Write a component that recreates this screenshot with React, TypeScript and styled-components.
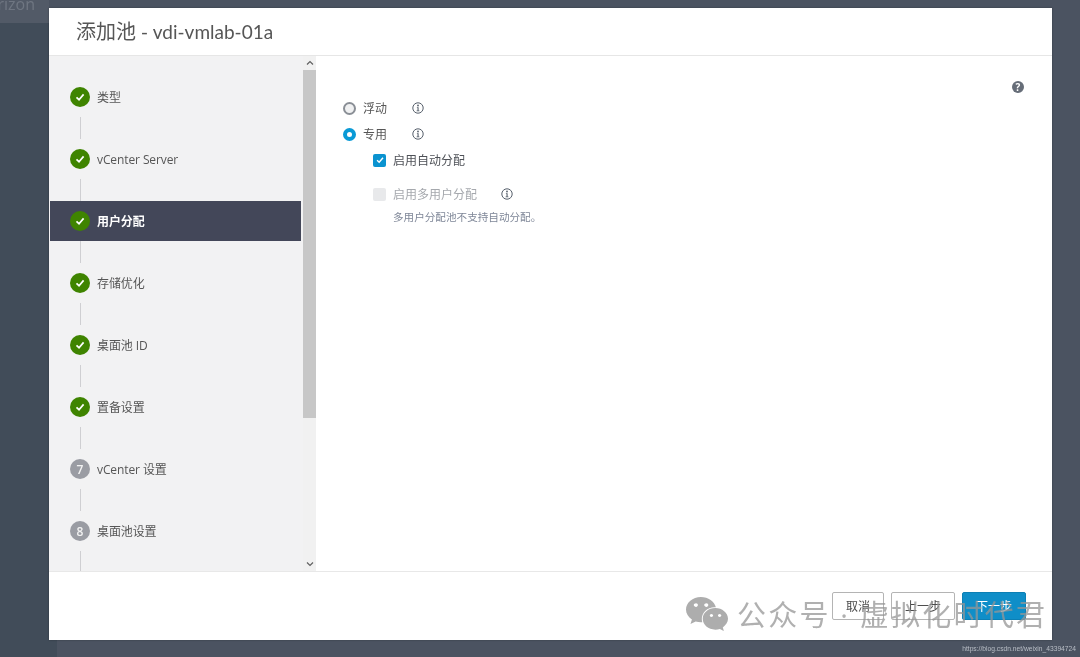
import React from "react";
import styled, { createGlobalStyle } from "styled-components";
import { FaWeixin } from "react-icons/fa";

const GlobalStyle = createGlobalStyle`
  html, body {
    margin: 0;
    padding: 0;
    height: 100%;
    overflow: hidden;
    background: #4b5361;
    font-family: "Open Sans", "Noto Sans CJK SC", sans-serif;
  }
  * { box-sizing: border-box; }
`;

const steps = [
  { label: "类型", done: true },
  { label: "vCenter Server", done: true },
  { label: "用户分配", done: true, active: true },
  { label: "存储优化", done: true },
  { label: "桌面池 ID", done: true },
  { label: "置备设置", done: true },
  { label: "vCenter 设置", num: 7 },
  { label: "桌面池设置", num: 8 },
];

const InfoIcon = () => (
  <InfoSvg viewBox="0 0 12 12">
    <circle cx="6" cy="6" r="5.2" fill="none" stroke="#565f6b" strokeWidth="1" />
    <circle cx="6" cy="3.5" r="0.9" fill="#565f6b" />
    <path d="M4.9 5.2H6.6V8.6H7.4V9.3H4.6V8.6H5.5V5.9H4.9Z" fill="#565f6b" />
  </InfoSvg>
);

const CheckIcon = ({ size }: { size: number }) => (
  <svg width={size} height={size} viewBox="0 0 12 12">
    <path d="M2.5 6.4L5 8.7L9.6 3.4" fill="none" stroke="#fff" strokeWidth="1.7" />
  </svg>
);

export default function App() {
  return (
    <Page>
      <GlobalStyle />
      <TopBand>Horizon</TopBand>
      <LeftBand />
      <Modal>
        <Title>
          添加池 - <TitleName>vdi-vmlab-01a</TitleName>
        </Title>
        <Body>
          <Sidebar>
            <StepList>
              {steps.map((s) => (
                <React.Fragment key={s.label}>
                  <StepRow $active={s.active}>
                    <StepBadge $done={s.done}>
                      {s.done ? <CheckIcon size={12} /> : s.num}
                    </StepBadge>
                    <StepLabel $active={s.active}>{s.label}</StepLabel>
                  </StepRow>
                  <Connector />
                </React.Fragment>
              ))}
            </StepList>
          </Sidebar>
          <ScrollTrack>
            <ScrollArrow viewBox="0 0 8 6">
              <path d="M1 4.5L4 1.5L7 4.5" fill="none" stroke="#606060" strokeWidth="1.2" />
            </ScrollArrow>
            <ScrollThumb />
            <ScrollArrow viewBox="0 0 8 6">
              <path d="M1 1.5L4 4.5L7 1.5" fill="none" stroke="#606060" strokeWidth="1.2" />
            </ScrollArrow>
          </ScrollTrack>
          <Content>
            <HelpIcon>?</HelpIcon>
            <Option>
              <Radio />
              <OptionText>浮动</OptionText>
              <InfoIcon />
            </Option>
            <Option>
              <Radio $checked />
              <OptionText>专用</OptionText>
              <InfoIcon />
            </Option>
            <SubGroup>
              <CheckRow>
                <CheckBox $checked>
                  <CheckIcon size={10} />
                </CheckBox>
                <CheckText>启用自动分配</CheckText>
              </CheckRow>
              <DisabledRow>
                <CheckBox />
                <CheckText $disabled>启用多用户分配</CheckText>
                <InfoIcon />
              </DisabledRow>
              <Hint>多用户分配池不支持自动分配。</Hint>
            </SubGroup>
          </Content>
        </Body>
        <Footer>
          <OutlineButton $width={52}>取消</OutlineButton>
          <OutlineButton $width={64}>上一步</OutlineButton>
          <PrimaryButton>下一步</PrimaryButton>
        </Footer>
      </Modal>
      <Watermark>
        <FaWeixin size={44} color="#adadad" />
        <WatermarkText>公众号 · 虚拟化时代君</WatermarkText>
      </Watermark>
      <SourceUrl>https://blog.csdn.net/weixin_43394724</SourceUrl>
    </Page>
  );
}

const Page = styled.div`
  position: relative;
  width: 1080px;
  height: 657px;
  overflow: hidden;
  padding: 8px 28px 17px 49px;
  background: #4b5361;
  filter: blur(0.45px);
`;

const TopBand = styled.div`
  position: absolute;
  left: 0;
  top: 0;
  width: 49px;
  height: 23px;
  overflow: hidden;
  background: #525a67;
  color: #6f7682;
  font-size: 16px;
  line-height: 8px;
  text-indent: -24px;
  white-space: nowrap;
`;

const LeftBand = styled.div`
  position: absolute;
  left: 0;
  top: 23px;
  width: 57px;
  height: 634px;
  background: #414c59;
`;

const Modal = styled.div`
  position: relative;
  display: flex;
  flex-direction: column;
  width: 1003px;
  height: 632px;
  background: #fff;
  box-shadow: 0 0 2px rgba(0, 0, 0, 0.3);
`;

const Title = styled.div`
  height: 48px;
  padding: 9px 0 0 27px;
  font-size: 20px;
  line-height: 30px;
  color: #565656;
  border-bottom: 1px solid #e6e6e6;
  flex: none;
`;

const TitleName = styled.span`
  font-family: Lato, "Open Sans", sans-serif;
  font-size: 19px;
`;

const Body = styled.div`
  display: flex;
  flex: none;
  height: 515px;
`;

const Sidebar = styled.div`
  width: 254px;
  background: #f2f2f3;
  overflow: hidden;
  padding-top: 21px;
`;

const StepList = styled.div`
  display: flex;
  flex-direction: column;
`;

const StepRow = styled.div<{ $active?: boolean }>`
  display: flex;
  align-items: center;
  height: 40px;
  margin: 0 2px 0 1px;
  padding-left: 20px;
  gap: 7px;
  background: ${(p) => (p.$active ? "#434759" : "transparent")};
`;

const StepBadge = styled.div<{ $done?: boolean }>`
  display: flex;
  align-items: center;
  justify-content: center;
  width: 20px;
  height: 20px;
  border-radius: 50%;
  background: ${(p) => (p.$done ? "#3f8400" : "#9a9ca3")};
  color: #f2f2f2;
  font-size: 12px;
  font-weight: 600;
`;

const StepLabel = styled.span<{ $active?: boolean }>`
  font-size: 12px;
  letter-spacing: -0.1px;
  font-weight: ${(p) => (p.$active ? 700 : 400)};
  color: ${(p) => (p.$active ? "#fff" : "#565656")};
`;

const Connector = styled.div`
  width: 1px;
  height: 22px;
  margin-left: 31px;
  background: #cfcfd2;
`;

const ScrollTrack = styled.div`
  display: flex;
  flex-direction: column;
  align-items: center;
  width: 13px;
  background: #f1f1f1;
`;

const ScrollArrow = styled.svg`
  flex: none;
  width: 8px;
  height: 6px;
  margin: 4px 0;
`;

const ScrollThumb = styled.div`
  width: 13px;
  height: 348px;
  margin-bottom: auto;
  background: #c7c7c7;
`;

const Content = styled.div`
  position: relative;
  flex: 1;
  padding: 39px 0 0 27px;
`;

const HelpIcon = styled.div`
  position: absolute;
  right: 28px;
  top: 25px;
  width: 12px;
  height: 12px;
  border-radius: 50%;
  background: #666d78;
  color: #fff;
  font-size: 10px;
  font-weight: 700;
  line-height: 12px;
  text-align: center;
`;

const Option = styled.div`
  display: flex;
  align-items: center;
  height: 26px;
`;

const Radio = styled.div<{ $checked?: boolean }>`
  width: 13px;
  height: 13px;
  margin-right: 7px;
  border-radius: 50%;
  background: ${(p) => (p.$checked ? "#fff" : "#f0f1f2")};
  border: ${(p) => (p.$checked ? "4px solid #0a9ad6" : "2px solid #8a8f96")};
`;

const OptionText = styled.span`
  width: 49px;
  font-size: 12px;
  color: #565656;
`;

const InfoSvg = styled.svg`
  width: 12px;
  height: 12px;
  flex: none;
`;

const SubGroup = styled.div`
  padding-left: 30px;
`;

const CheckRow = styled.div`
  display: flex;
  align-items: center;
  height: 26px;
`;

const DisabledRow = styled(CheckRow)`
  margin-top: 8px;
`;

const CheckBox = styled.div<{ $checked?: boolean }>`
  display: flex;
  align-items: center;
  justify-content: center;
  width: 13px;
  height: 13px;
  margin-right: 7px;
  border-radius: 2px;
  background: ${(p) => (p.$checked ? "#0a93d0" : "#e8e9eb")};
`;

const CheckText = styled.span<{ $disabled?: boolean }>`
  font-size: 12px;
  color: ${(p) => (p.$disabled ? "#a5a8ad" : "#4e5157")};
  margin-right: ${(p) => (p.$disabled ? "24px" : "0")};
`;

const Hint = styled.div`
  margin: 1px 0 0 20px;
  font-size: 10.6px;
  line-height: 18px;
  color: #7f8798;
`;

const Footer = styled.div`
  display: flex;
  justify-content: flex-end;
  gap: 7px;
  flex: none;
  height: 69px;
  padding: 20px 26px 0 0;
  border-top: 1px solid #e8e8e8;
`;

const OutlineButton = styled.button<{ $width: number }>`
  width: ${(p) => p.$width}px;
  height: 28px;
  padding: 0;
  font-family: inherit;
  font-size: 12px;
  color: #4a4a4a;
  background: #fff;
  border: 1px solid #b4b4b4;
  border-radius: 2px;
`;

const PrimaryButton = styled(OutlineButton).attrs({ $width: 64 })`
  color: #fff;
  background: #0f8ec8;
  border-color: #0c7fb4;
`;

const Watermark = styled.div`
  position: absolute;
  left: 685px;
  top: 590px;
  display: flex;
  align-items: center;
  gap: 8px;
`;

const WatermarkText = styled.span`
  padding-top: 3px;
  font-size: 29px;
  line-height: 44px;
  letter-spacing: 2.2px;
  white-space: nowrap;
  color: rgba(150, 150, 150, 0.75);
`;

const SourceUrl = styled.div`
  position: absolute;
  right: 4px;
  top: 643px;
  font-family: "Liberation Sans", sans-serif;
  font-size: 6.7px;
  line-height: 11px;
  color: #b9bec6;
`;
